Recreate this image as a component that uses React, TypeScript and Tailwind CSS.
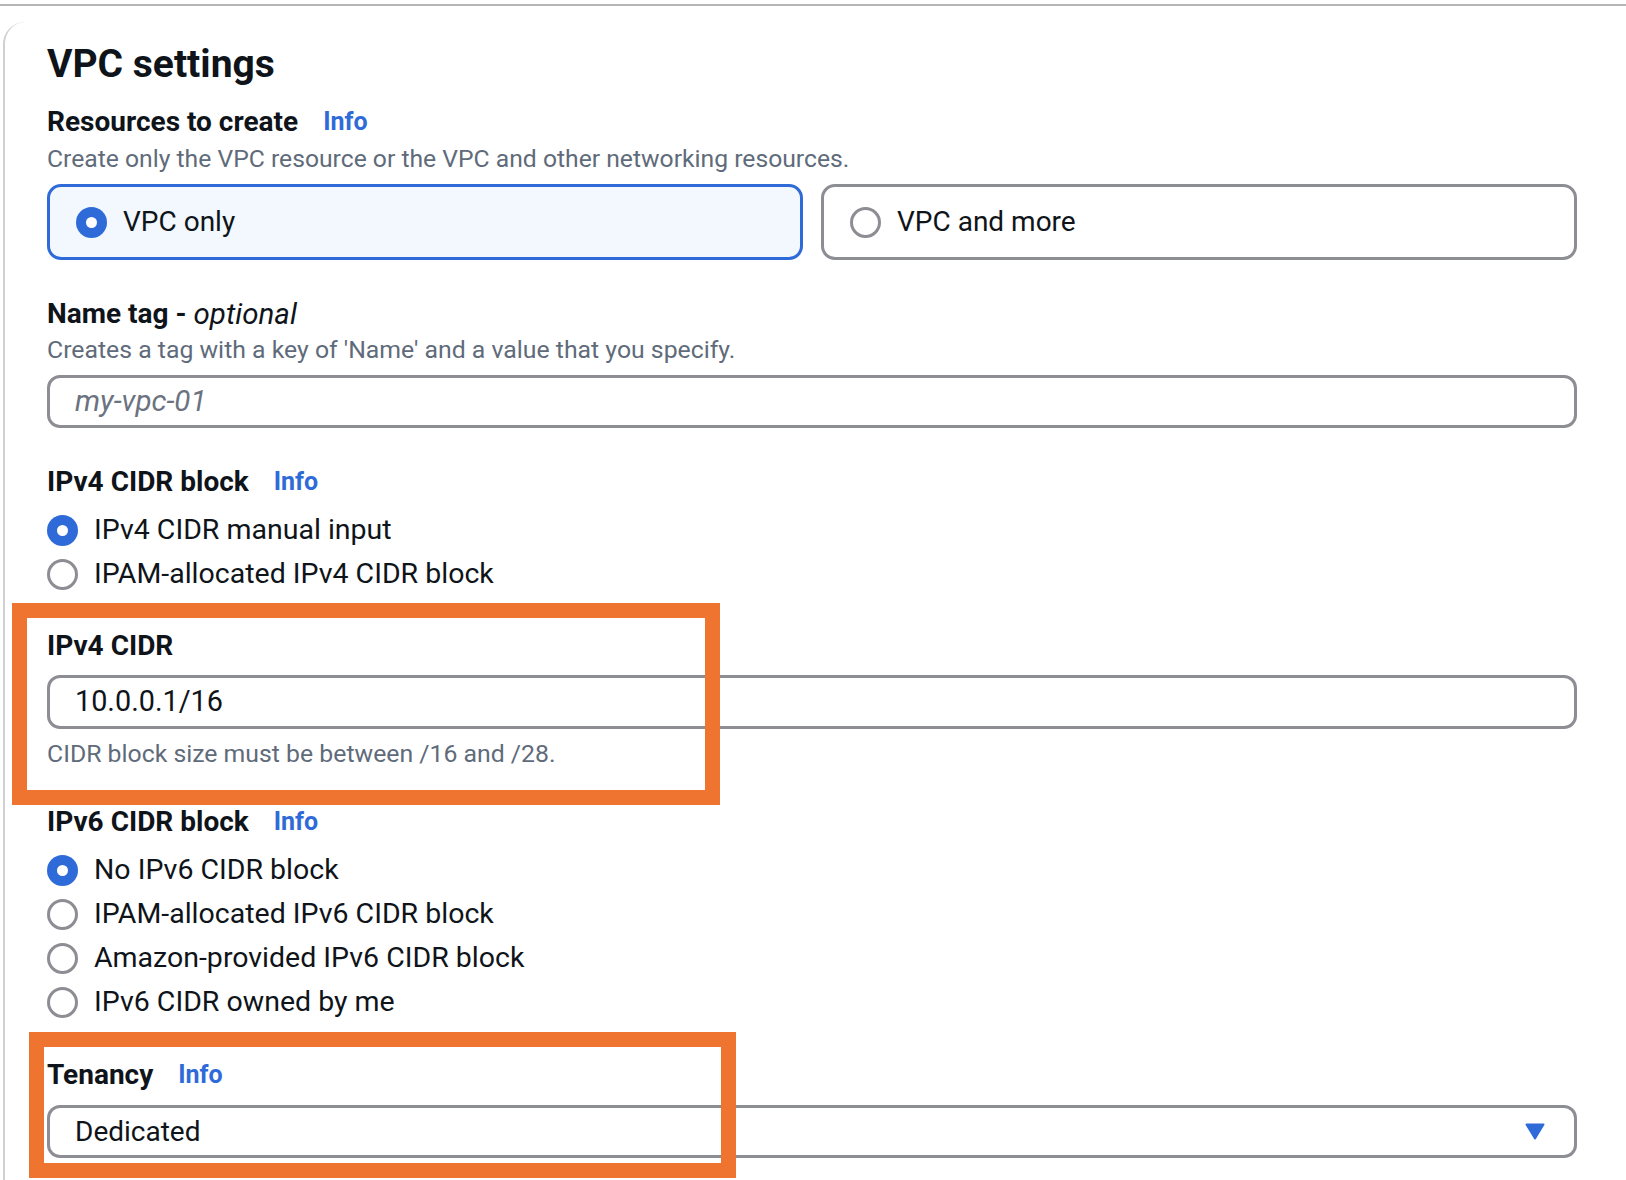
import React from "react";

const BLUE = "#2f6bd8";

const Radio = ({ checked }: { checked?: boolean }) =>
  checked ? (
    <span className="flex h-[31px] w-[31px] shrink-0 items-center justify-center rounded-full bg-[#2f6bd8]">
      <span className="h-[11px] w-[11px] rounded-full bg-white" />
    </span>
  ) : (
    <span className="h-[31px] w-[31px] shrink-0 rounded-full border-[3px] border-[#8d8d94] bg-white" />
  );

const Label = ({ children, info, className = "" }: { children: React.ReactNode; info?: boolean; className?: string }) => (
  <div className={`flex h-[32px] items-center text-[28px] font-bold leading-[32px] text-[#0f141a] ${className}`}>
    <span>{children}</span>
    {info && <span className="ml-[25px] text-[25px] font-bold text-[#2f6bd8]">Info</span>}
  </div>
);

const Option = ({ label, checked }: { label: string; checked?: boolean }) => (
  <div className="flex h-[44px] items-center gap-[16px] text-[28.5px] text-[#0f141a]">
    <Radio checked={checked} />
    <span>{label}</span>
  </div>
);

export default function App() {
  return (
    <div
      className="relative h-[1180px] w-[1626px] overflow-hidden bg-white"
      style={{ fontFamily: "Roboto, 'Noto Sans', sans-serif" }}
    >
      <div className="mt-[4px] h-[2px] w-full bg-[#b5b5b8]" />

      <div className="ml-[3px] mt-[16px] h-[1200px] rounded-tl-[22px] border-l-2 border-[#d0d0d4] pl-[42px] pt-[18px]">
        <div className="w-[1530px]">
          <h1 className="h-[48px] text-[39px] font-bold leading-[48px] text-[#0f141a]">VPC settings</h1>

          <Label info className="mt-[18px]">Resources to create</Label>
          <p className="mt-[6px] h-[30px] text-[24.7px] leading-[30px] text-[#5f6b7a]">
            Create only the VPC resource or the VPC and other networking resources.
          </p>

          <div className="mt-[10px] grid grid-cols-2 gap-[18px]">
            <div className="flex h-[76px] items-center gap-[16px] rounded-[14px] border-[3px] border-[#2f6bd8] bg-[#f2f8fd] pl-[26px] text-[28px] text-[#0f141a]">
              <Radio checked />
              <span>VPC only</span>
            </div>
            <div className="flex h-[76px] items-center gap-[16px] rounded-[14px] border-[3px] border-[#8d8d94] bg-white pl-[26px] text-[28px] text-[#0f141a]">
              <Radio />
              <span>VPC and more</span>
            </div>
          </div>

          <div className="mt-[38px] flex h-[32px] items-center text-[28px] leading-[32px] text-[#0f141a]">
            <span className="font-bold">Name tag - </span>
            <span className="ml-[7px] text-[29.5px] italic">optional</span>
          </div>
          <p className="mt-[5px] h-[30px] text-[24.8px] leading-[30px] text-[#5f6b7a]">
            Creates a tag with a key of 'Name' and a value that you specify.
          </p>
          <div className="mt-[10px] flex h-[53px] items-center rounded-[13px] border-[3px] border-[#8d8d94] pl-[25px] text-[29.5px] italic text-[#6b7280]">
            my-vpc-01
          </div>

          <Label info className="mt-[38px]">IPv4 CIDR block</Label>
          <div className="mt-[10px]">
            <Option label="IPv4 CIDR manual input" checked />
            <Option label="IPAM-allocated IPv4 CIDR block" />
          </div>

          <Label className="mt-[34px]">IPv4 CIDR</Label>
          <div className="mt-[13px] flex h-[54px] items-center rounded-[13px] border-[3px] border-[#8d8d94] pl-[25px] text-[28.8px] text-[#0f141a]">
            10.0.0.1/16
          </div>
          <p className="mt-[11px] h-[28px] text-[24.8px] leading-[28px] text-[#5f6b7a]">
            CIDR block size must be between /16 and /28.
          </p>

          <Label info className="mt-[38px]">IPv6 CIDR block</Label>
          <div className="mt-[10px]">
            <Option label="No IPv6 CIDR block" checked />
            <Option label="IPAM-allocated IPv6 CIDR block" />
            <Option label="Amazon-provided IPv6 CIDR block" />
            <Option label="IPv6 CIDR owned by me" />
          </div>

          <Label info className="mt-[35px]">Tenancy</Label>
          <div className="mt-[14px] flex h-[53px] items-center justify-between rounded-[13px] border-[3px] border-[#8d8d94] pl-[25px] pr-[29px] text-[28px] text-[#0f141a]">
            <span>Dedicated</span>
            <svg width="20" height="17" viewBox="0 0 20 17">
              <path d="M1.5 1.5 L18.5 1.5 L10 15.5 Z" fill={BLUE} stroke={BLUE} strokeWidth="2" strokeLinejoin="round" />
            </svg>
          </div>
        </div>
      </div>

      {/* annotation boxes */}
      <div className="absolute left-[12px] top-[603px] h-[202px] w-[708px] border-[15px] border-[#ef7430]" />
      <div className="absolute left-[29px] top-[1032px] h-[146px] w-[707px] border-[15px] border-[#ef7430]" />
    </div>
  );
}
